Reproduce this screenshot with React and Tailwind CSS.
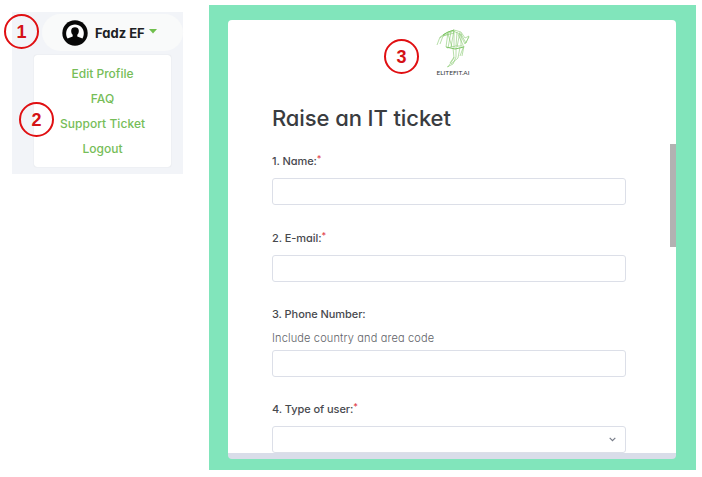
import React from "react";

function StepBadge({ n, className }) {
  return (
    <span
      className={`absolute flex h-[35px] w-[35px] items-center justify-center rounded-full border-2 border-[#e00f12] font-['Liberation_Sans',sans-serif] text-[18px] font-bold leading-none text-[#d41216] ${className}`}
    >
      {n}
    </span>
  );
}

function Avatar() {
  return (
    <svg width="26" height="26" viewBox="0 0 26 26">
      <circle cx="13" cy="13" r="12.7" fill="#080808" />
      <path
        d="M5.6 18.6C3.4 15 3.7 10.2 6.5 7.3C10 3.7 16 3.7 19.5 7.3C22.3 10.2 22.6 15 20.4 18.6C19 17.6 16.8 17.6 15.3 16.6V14.7C16.4 13.8 16.9 12.2 16.8 10.5C16.6 8.3 15.2 7.2 13 7.2S9.4 8.3 9.2 10.5C9.1 12.2 9.6 13.8 10.7 14.7V16.6C9.2 17.6 7 17.6 5.6 18.6Z"
        fill="#fff"
      />
    </svg>
  );
}

function Logo() {
  return (
    <svg width="34" height="40" viewBox="0 0 34 40" fill="none" stroke="#7cc563" strokeWidth=".55">
      <path d="M1 16L4 8L10 4L18 1L25 3L29 9L33 7L30 14L25 5M4 15L7 7L17 2L24 5L29 15L33 8M10 4L4 9M7 7L18 4" />
      <path d="M12 3L10 18M15 3L12 19M18 1L15 18M18 2L18 19M21 3L20 17M24 3L21 18M25 4L25 17M12 5L16 18M22 5L27 16" />
      <path d="M11 19L20 17L28 17M28 17L26 27M20 18L20 28L17 35L11 38M17 19L18 29L12 38M24 18L22 29L15 35M27 19L24 27M18 28L14 34" />
      <path d="M10 18L19 20L28 18M7 6L12 3L18 1" strokeWidth="1" />
    </svg>
  );
}

function Label({ children, required, className }) {
  return (
    <div className={`flex h-4 items-center whitespace-nowrap text-[11px] font-medium tracking-[-0.07px] text-[#47494e] ${className}`}>
      <span>{children}</span>
      {required && <span className="-mt-1 text-[9px] text-[#e14450]">*</span>}
    </div>
  );
}

const inputStyle = "h-[27px] w-[354px] shrink-0 rounded-[3px] border border-[#dcdfe8] bg-white outline-none";

export default function App() {
  return (
    <div className="relative flex h-[477px] w-[702px] overflow-hidden bg-white font-['Inter',sans-serif] [font-feature-settings:'cv11']">
      <aside className="ml-3 mt-3 h-[162px] w-[171px] shrink-0 bg-[#f2f4f8] pt-[2px]">
        <button className="ml-[30px] flex h-[37px] w-[141px] items-center rounded-full bg-[#f9fafa] pl-[20px]">
          <Avatar />
          <span className="ml-[7px] w-[52px] whitespace-nowrap text-left text-[13px] font-bold leading-5 text-[#202124]">Fadz EF</span>
          <svg className="ml-[2px] -mt-[3px]" width="8" height="5" viewBox="0 0 8 5">
            <path d="M0 0H8L4 4.5Z" fill="#70bf4c" />
          </svg>
        </button>
        <nav className="ml-[22px] mt-[4px] flex h-[112px] w-[137px] flex-col items-center rounded-[3px] bg-white pt-[7px] text-[12px] font-medium text-[#76bd58] shadow-[0_0_1px_rgba(80,90,110,0.25)]">
          <a className="h-[25px] leading-[24px]">Edit Profile</a>
          <a className="h-[25px] leading-[24px]">FAQ</a>
          <a className="h-[24px] leading-[24px] tracking-[0.05px]">Support Ticket</a>
          <a className="h-[25px] leading-[25px]">Logout</a>
        </nav>
      </aside>

      <main className="ml-[26px] mt-[5px] h-[465px] w-[487px] shrink-0 bg-[#81e5bb] pl-[19px] pt-[15px]">
        <section className="flex h-[439px] w-[448px] overflow-hidden rounded-[4px] border-b-[6px] border-[#d9dde9] bg-white">
          <form className="flex w-[442px] flex-col pl-[44px]">
            <div className="ml-[162px] mt-[9px] flex h-[50px] w-[38px] flex-col items-center">
              <Logo />
              <span className="whitespace-nowrap font-['Lato',sans-serif] text-[6.5px] font-normal leading-[8px] text-[#35373b]">ELITEFIT.AI</span>
            </div>
            <h1 className="mt-[22px] h-[34px] whitespace-nowrap text-[22px] font-medium leading-[34px] tracking-[-0.1px] text-[#3a3c40]">Raise an IT ticket</h1>
            <Label required className="mt-[18px]">1. Name:</Label>
            <input className={`mt-[9px] ${inputStyle}`} />
            <Label required className="mt-[25px]">2. E-mail:</Label>
            <input className={`mt-[9px] ${inputStyle}`} />
            <Label className="mt-[24px]">3. Phone Number:</Label>
            <p className="mt-[8px] h-4 whitespace-nowrap text-[11px] font-light leading-4 tracking-[0.15px] text-[#606267]">Include country and area code</p>
            <input className={`mt-[4px] ${inputStyle}`} />
            <Label required className="mt-[24px]">4. Type of user:</Label>
            <div className={`mt-[9px] flex items-center justify-end pr-[9px] ${inputStyle}`}>
              <svg width="7" height="5" viewBox="0 0 7 5" fill="none">
                <path d="M.7 .9L3.5 3.7L6.3 .9" stroke="#777c88" strokeWidth="1.2" />
              </svg>
            </div>
          </form>
          <div className="mt-[124px] h-[103px] w-[6px] shrink-0 bg-[#b2b2b2]" />
        </section>
      </main>

      <StepBadge n="1" className="left-[4px] top-[14px]" />
      <StepBadge n="2" className="left-[19px] top-[102px]" />
      <StepBadge n="3" className="left-[384px] top-[39px]" />
    </div>
  );
}
